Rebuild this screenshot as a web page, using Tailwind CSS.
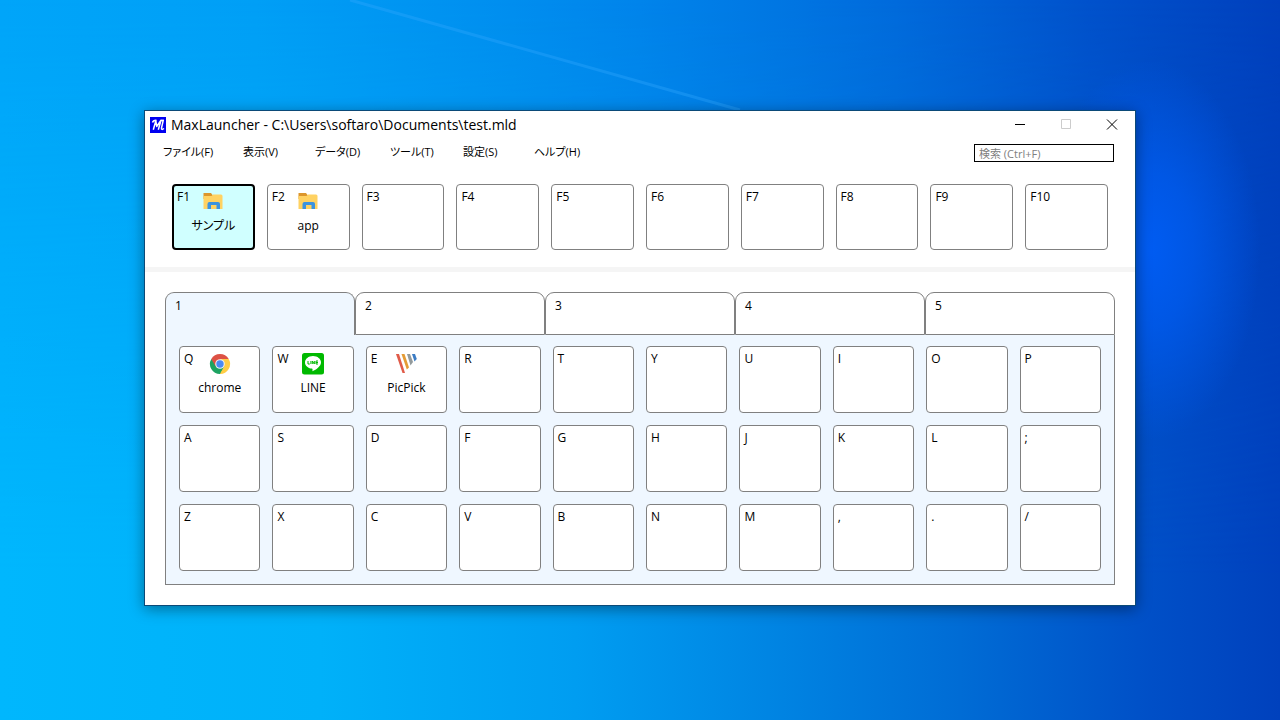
<!DOCTYPE html>
<html lang="ja">
<head>
<meta charset="utf-8">
<meta name="viewport" content="width=device-width, initial-scale=1">
<title>MaxLauncher</title>
<script src="https://cdn.jsdelivr.net/npm/@tailwindcss/browser@4"></script>
</head>
<body class="relative min-h-screen overflow-x-hidden bg-[#0091f2] font-['Open_Sans','Noto_Sans_CJK_JP',sans-serif] text-xs text-black [font-feature-settings:'palt']">
<svg class="absolute inset-0 h-full w-full" viewBox="0 0 1280 720" preserveAspectRatio="none" aria-hidden="true">
  <defs>
    <linearGradient id="top" x1="0" x2="1" y1="0" y2="0">
      <stop offset="0" stop-color="#00a5f9"/><stop offset=".2" stop-color="#009ff6"/><stop offset=".4" stop-color="#008eef"/><stop offset=".5" stop-color="#0084eb"/><stop offset=".7" stop-color="#006bdc"/><stop offset=".85" stop-color="#0052cc"/><stop offset="1" stop-color="#0040bd"/>
    </linearGradient>
    <linearGradient id="bottom" x1="0" x2="1" y1="0" y2="0">
      <stop offset="0" stop-color="#00b7fd"/><stop offset=".25" stop-color="#00b1f9"/><stop offset=".45" stop-color="#009df1"/><stop offset=".6" stop-color="#0085e3"/><stop offset=".75" stop-color="#006cd5"/><stop offset=".9" stop-color="#004fc7"/><stop offset="1" stop-color="#0041bd"/>
    </linearGradient>
    <linearGradient id="fade" x1="0" x2="0" y1="0" y2="1"><stop offset="0" stop-color="#000"/><stop offset=".8" stop-color="#fff"/></linearGradient>
    <mask id="m"><rect width="1280" height="720" fill="url(#fade)"/></mask>
    <radialGradient id="glow"><stop offset="0" stop-color="#005cf2"/><stop offset=".4" stop-color="#005cf2" stop-opacity=".7"/><stop offset="1" stop-color="#005cf2" stop-opacity="0"/></radialGradient>
  </defs>
  <rect width="1280" height="720" fill="url(#top)"/>
  <rect width="1280" height="720" fill="url(#bottom)" mask="url(#m)"/>
  <ellipse cx="1150" cy="250" rx="110" ry="190" fill="url(#glow)"/>
  <path d="M350 0L740 110" stroke="#35a9ff" stroke-opacity=".35" stroke-width="3"/>
</svg>
<div class="relative px-4 pt-[110px] pb-6 lg:px-36">
<main class="border border-[#0b4a78] bg-white shadow-[0_3px_14px_rgba(0,0,0,0.4)]">
  <header class="flex h-7 items-center pl-[5px]">
    <svg class="size-4 shrink-0" viewBox="0 0 16 16" aria-hidden="true"><rect width="16" height="16" fill="#0000f0"/><path d="M2.500 5.500Q3 3.300 6 3.200L3.300 12.700M5.800 3.500L6.700 9.500L11 3.200L8.300 12.700M11 3.500L13.300 3.200L11.500 11Q11.200 13.500 14 11.500" fill="none" stroke="#fff" stroke-width="1.500" stroke-linejoin="round"/></svg>
    <h1 class="ml-[5px] flex-1 truncate text-sm">MaxLauncher - C:\Users\softaro\Documents\test.mld</h1>
    <button class="grid h-7 w-[46px] place-items-center" aria-label="最小化"><svg class="h-3 w-3" viewBox="0 0 12 12"><path d="M1 5.500H11" stroke="#000"/></svg></button>
    <button class="grid h-7 w-[46px] place-items-center" aria-label="最大化" disabled><svg class="h-3 w-3" viewBox="0 0 12 12"><path d="M1.500 .5H10.500V9.500H1.500Z" fill="none" stroke="#ccc"/></svg></button>
    <button class="grid h-7 w-[46px] place-items-center" aria-label="閉じる"><svg class="h-3 w-3" viewBox="0 0 12 12"><path d="M1 .5L11 10.500M11 .5L1 10.500" stroke="#000"/></svg></button>
  </header>
  <div class="flex items-start justify-between pr-[21px] pl-[18px]">
    <nav class="grid h-[26px] grid-cols-[80px_72px_75px_73px_71px_auto] items-center justify-items-start whitespace-nowrap text-[11px]" aria-label="メニュー">
      <button>ファイル(F)</button><button>表示(V)</button><button>データ(D)</button><button>ツール(T)</button><button>設定(S)</button><button>ヘルプ(H)</button>
    </nav>
    <input type="search" aria-label="検索" placeholder="検索 (Ctrl+F)" class="mt-[5px] h-[18px] w-[140px] border border-black px-1 text-[11px] placeholder:text-[#808080]">
  </div>
  <section id="fkeys" class="mt-[19px] grid grid-cols-10 gap-3 px-[27px]" aria-label="ファンクションキー"></section>
  <div class="mt-[17px] h-[5px] bg-[#f5f5f5]"></div>
  <section class="m-5">
    <div id="tabs" class="grid grid-cols-5 bg-[linear-gradient(to_top,#eff7ff_10px,#fff_10px)]" role="tablist"></div>
    <div id="keys" class="grid grid-cols-10 gap-3 border border-t-0 border-[#808080] bg-[#eff7ff] px-[13px] pt-[11px] pb-[13px]" role="tabpanel"></div>
  </section>
</main>
</div>

<template id="folder"><svg class="size-5" viewBox="0 0 20 20"><path d="M.5 1H8L9.500 3H18V7H.5Z" fill="#dc962c"/><path d="M.5 4H8.500L10 2.500H18Q19.500 2.500 19.500 4V17H.5Z" fill="#ffd262"/><path d="M4.500 17V12Q4.500 10 6.500 10H15Q17 10 17 12V17H13.500V13H8V17Z" fill="#3b93e0"/></svg></template>
<template id="chrome"><svg class="size-[22px]" viewBox="0 0 22 22"><path d="M11 11L2.300 6A10 10 0 0 1 19.700 6Z" fill="#dd5144"/><path d="M11 11L19.700 6A10 10 0 0 1 11 21Z" fill="#ffcd46"/><path d="M11 11L11 21A10 10 0 0 1 2.300 6Z" fill="#1da362"/><path d="M11 6H19.700L15.300 13.500Z" fill="#ffcd46"/><path d="M2.300 6L6.700 13.500L11 6Z" fill="#dd5144"/><path d="M11 21L15.300 13.500L8 15L6.700 13.500Z" fill="#1da362"/><path d="M11 21L15.300 13.500L16 11L19 14Z" fill="#ffcd46"/><circle cx="11" cy="11" r="4.800" fill="#f1f1f1"/><circle cx="11" cy="11" r="3.700" fill="#4a8af4"/></svg></template>
<template id="line"><svg class="size-[22px]" viewBox="0 0 22 22"><rect width="22" height="21.500" rx="2.500" fill="#00b900"/><path d="M11 3C6.500 3 3 5.900 3 9.400C3 12.600 5.900 15 9.700 15.600C10.800 15.800 10.600 16.300 10.400 18.200C14.500 16.300 19 13 19 9.400C19 5.900 15.500 3 11 3Z" fill="#fff"/><path d="M6 8V11H7.800M8.900 8V11M10.300 11V8L12.300 11V8M16 8H14V11H16M14 9.500H16" fill="none" stroke="#00b900"/></svg></template>
<template id="picpick"><svg class="size-[22px]" viewBox="0 0 22 22"><path d="M1 1H4L10 20H7.500Z" fill="#e05b49"/><path d="M6.500 1H9.500L14 14.500L11.800 16.500Z" fill="#e49b35"/><path d="M12 1H15L18 9L15.500 12.500Z" fill="#929a9c"/><path d="M17 1H20L21.800 6L19.500 8.500Z" fill="#3c7cc4"/></svg></template>
<script>
const apps = {F1:['folder','サンプル'],F2:['folder','app'],Q:['chrome','chrome'],W:['line','LINE'],E:['picpick','PicPick']};
function key(k, size) {
  const a = apps[k];
  const look = k === 'F1' ? 'border-2 border-black bg-[#d0ffff] px-[3px]' : 'border border-[#808080] bg-white px-1 pt-px';
  const body = a ? `<span class="col-start-1 row-start-1 flex flex-col items-center gap-[5px] justify-self-center pt-[5px] leading-4"><span class="flex h-[22px] items-center">${document.getElementById(a[0]).innerHTML}</span>${a[1]}</span>` : '';
  return `<button class="grid grid-cols-1 content-start rounded ${size} ${look}"><span class="col-start-1 row-start-1 justify-self-start pt-[3px] leading-4">${k}</span>${body}</button>`;
}
const fkeys = document.getElementById('fkeys');
const keys = document.getElementById('keys');
const tabs = document.getElementById('tabs');
fkeys.innerHTML = ['F1','F2','F3','F4','F5','F6','F7','F8','F9','F10'].map(k => key(k, 'h-[66px]')).join('');
keys.innerHTML = [...'QWERTYUIOPASDFGHJKL;ZXCVBNM,./'].map(k => key(k, 'h-[67px]')).join('');
tabs.innerHTML = [1,2,3,4,5].map(n => `<button role="tab" aria-selected="${n === 1}" class="flex h-[43px] items-start rounded-t-[9px] border border-[#808080] px-[9px] pt-[5px] leading-4 ${n === 1 ? 'border-b-0 bg-[#eff7ff]' : 'bg-white'}">${n}</button>`).join('');
</script>
</body>
</html>
